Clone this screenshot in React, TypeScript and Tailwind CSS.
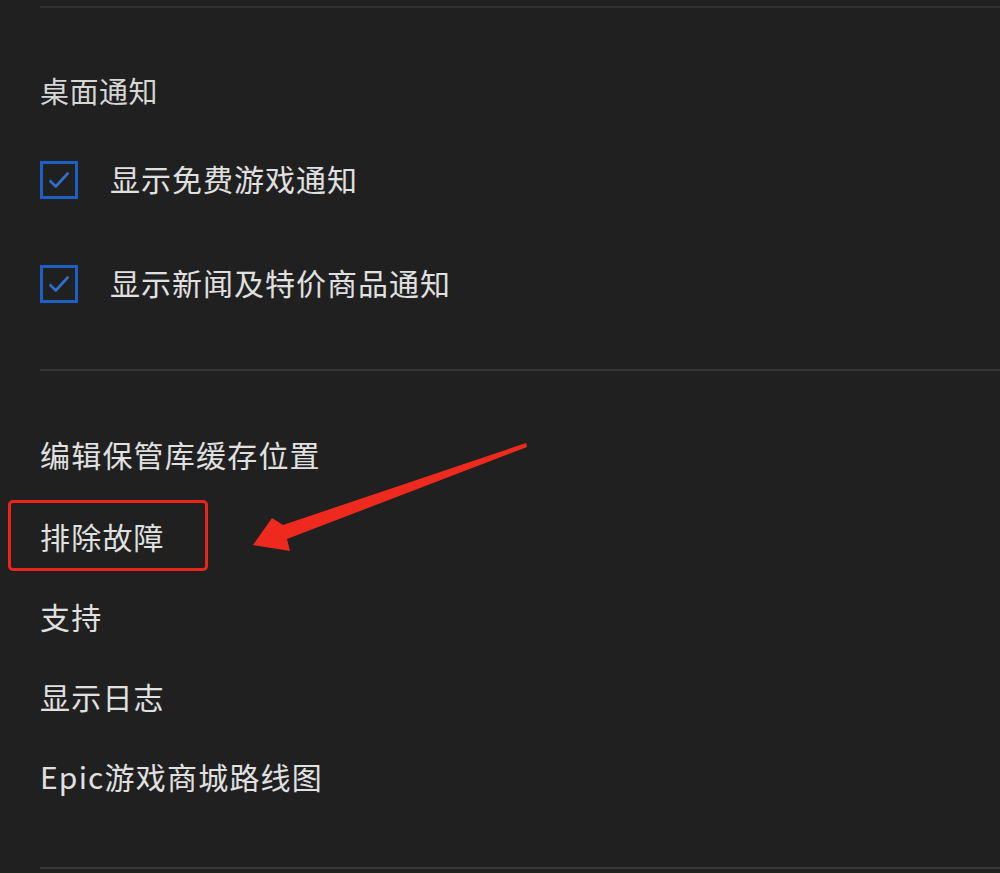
// Settings panel: desktop notifications + misc links (dark theme)

const font = { fontFamily: '"Noto Sans CJK SC", "Noto Sans", sans-serif' };

function CheckRow({ label }: { label: string }) {
  return (
    <div className="h-[40px] flex items-center">
      <div className="w-[38px] h-[38px] border-[3px] border-[#1d5fc2] flex items-center justify-center">
        <svg width="26" height="26" viewBox="0 0 24 24" fill="none">
          <path d="M4 13l5 5L20 6" stroke="#2f6fcf" strokeWidth="2.4" strokeLinecap="round" strokeLinejoin="round" />
        </svg>
      </div>
      <span className="ml-[32px] pb-[5px] text-[30px] leading-[40px] tracking-[1px] text-[#e0e0e0]">{label}</span>
    </div>
  );
}

function LinkRow({ label }: { label: string }) {
  return (
    <div className="h-[40px] flex items-center">
      <span className="pb-[5px] text-[30px] leading-[40px] tracking-[1.2px] text-[#e0e0e0]">{label}</span>
    </div>
  );
}

export default function App() {
  return (
    <div className="relative w-[1000px] h-[873px] bg-[#202020] overflow-hidden" style={font}>
      <div className="pl-[40px] flex flex-col">
        <div className="mt-[6px] h-[2px] bg-[#2f2f2f]" />

        {/* Desktop notifications */}
        <div className="mt-[63px] h-[40px] flex items-center">
          <span className="pb-[3px] text-[29px] leading-[40px] tracking-[0.5px] text-[#d6d6d6]">桌面通知</span>
        </div>
        <div className="mt-[49px]">
          <CheckRow label="显示免费游戏通知" />
        </div>
        <div className="mt-[64px]">
          <CheckRow label="显示新闻及特价商品通知" />
        </div>

        <div className="mt-[65px] h-[2px] bg-[#363636]" />

        {/* Misc links */}
        <div className="mt-[65px]">
          <LinkRow label="编辑保管库缓存位置" />
        </div>
        <div className="mt-[42px]">
          <LinkRow label="排除故障" />
        </div>
        <div className="mt-[40px]">
          <LinkRow label="支持" />
        </div>
        <div className="mt-[40px]">
          <LinkRow label="显示日志" />
        </div>
        <div className="mt-[40px]">
          <LinkRow label="Epic游戏商城路线图" />
        </div>

        <div className="mt-[69px] h-[2px] bg-[#363636]" />
      </div>

      {/* annotation: highlight box + arrow */}
      <div className="absolute left-[8px] top-[500px] w-[200px] h-[71px] border-[3px] border-[#e8261c] rounded-[5px]" />
      <svg className="absolute left-0 top-0" width="1000" height="873" viewBox="0 0 1000 873">
        <polygon
          points="526,443 283,525 272,518 253,545 290,551 287,539 527,447"
          fill="#ee2a1e"
        />
      </svg>
    </div>
  );
}
